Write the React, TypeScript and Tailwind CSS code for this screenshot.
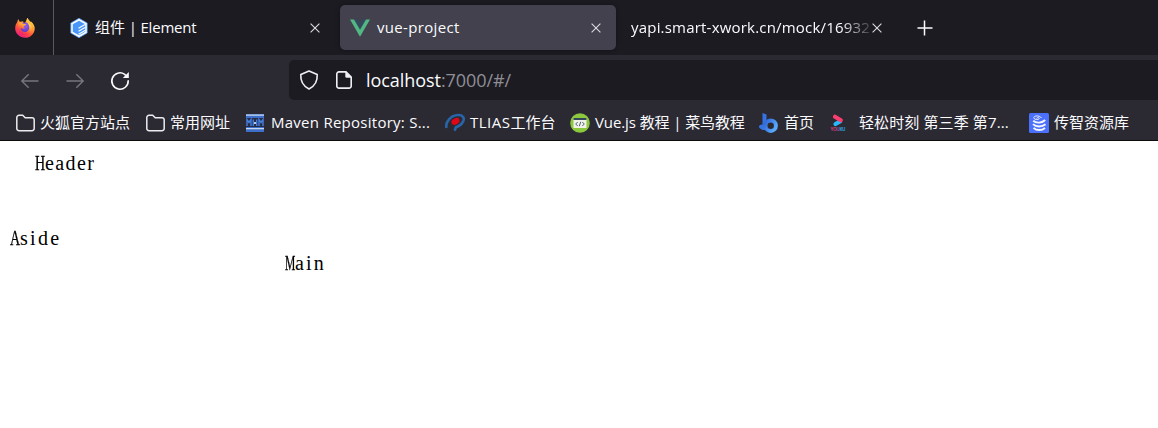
import type { ReactNode } from 'react';

const ui = "font-['Open_Sans','Noto_Sans_CJK_SC',sans-serif]";

function Firefox() {
  return (
    <svg width="20" height="20" viewBox="0 0 20 20">
      <defs>
        <linearGradient id="flame" x1="0.85" y1="0" x2="0.25" y2="1">
          <stop offset="0" stopColor="#fff44f" />
          <stop offset="0.35" stopColor="#ffa436" />
          <stop offset="0.7" stopColor="#ff4a3f" />
          <stop offset="1" stopColor="#e61587" />
        </linearGradient>
        <radialGradient id="globe" cx="0.6" cy="0.3" r="0.8">
          <stop offset="0" stopColor="#9059ff" />
          <stop offset="1" stopColor="#5b38b8" />
        </radialGradient>
      </defs>
      <path d="M2.2 4.200 3.100 1l1.600 2.700 2-.2L8.300 3.200c-.4 1 .2 1.800 1.700 2.100L12.500-.5c.8 2.400 2.300 3.300 3.200 4.600l.3-.7c2.500 2 3.900 4.700 3.700 7.500C19.400 16 15.200 19.800 10 19.800S.3 15.800.2 10.600C.1 7.800.9 5.800 2.200 4.200Z" fill="url(#flame)" />
      <circle cx="10" cy="9.500" r="4.900" fill="url(#globe)" />
      <path d="M3.500 4.800c1.500-.5 3.200-.2 4.500.9 1.500 0 2.700.3 3 .9-.5 1.100-2 1-2.300 1.900-.2 1 .6 1.500 1.800 1.300-1.200 1.500-3.500 1.200-4.600-.1-.4 3 2.400 5 5.200 4.300 3.800-1 4-6 1.500-9 4 .7 5.200 5.500 3.700 8.500-2.500 5-10 5-12.300.3-1.300-2.800-1-6-.5-9Z" fill="url(#flame)" />
    </svg>
  );
}

function ElementLogo() {
  return (
    <svg width="20" height="20" viewBox="0 0 20 20">
      <path d="M10 .3 18.200 5v10L10 19.700 1.800 15V5Z" fill="#f5faff" stroke="#4794f5" strokeWidth="0.700" />
      <path d="m10 2.700 6.200 3.500v7.600L10 17.300l-6.200-3.500V6.200Z" fill="#4996fb" />
      <path d="m9.500 10.200 7-4M9.500 13.200l7-4M9.500 16.200l7-4" stroke="#f5faff" strokeWidth="1.300" />
    </svg>
  );
}

function VueLogo() {
  return (
    <svg width="20" height="20" viewBox="0 0 20 20">
      <path d="M4 1.400h4l2 3.400 2-3.400h4L10 12Z" fill="#35495e" />
      <path d="M0 1.400h4l6 10.300 6-10.300h4L10 18.700Z" fill="#53b784" />
    </svg>
  );
}

function Close() {
  return (
    <svg width="10" height="10" viewBox="0 0 10 10" className="shrink-0">
      <path d="m.6.600 8.800 8.800m0-8.800L.6 9.400" stroke="#d8d8dc" strokeWidth="1.150" />
    </svg>
  );
}

function Arrow({ flip = false }: { flip?: boolean }) {
  return (
    <svg width="20" height="20" viewBox="0 0 20 20" className={flip ? 'rotate-180' : ''}>
      <path d="M18.500 10H1.800M8.700 3.200 1.800 10l6.900 6.800" fill="none" stroke="#77767d" strokeWidth="1.400" />
    </svg>
  );
}

function Reload() {
  return (
    <svg width="20" height="20" viewBox="0 0 20 20">
      <path d="M18.200 9.800a8.200 8.200 0 1 1-3.500-6.500L17 5.500" fill="none" stroke="#fbfbfe" strokeWidth="1.600" strokeLinecap="round" />
      <path d="M18.800 1.100v6h-6Z" fill="#fbfbfe" />
    </svg>
  );
}

function Shield() {
  return (
    <svg width="20" height="20" viewBox="0 0 20 20">
      <path d="M10 1 18.200 4.600c.4 6-2.600 11.500-8.200 14.400C4.400 16.100 1.400 10.600 1.800 4.600Z" fill="none" stroke="#f0f0f4" strokeWidth="1.600" strokeLinejoin="round" />
    </svg>
  );
}

function PageIcon() {
  return (
    <svg width="20" height="20" viewBox="0 0 20 20">
      <path d="M12 1.900H5A2.200 2.200 0 0 0 2.800 4.100v11.800A2.200 2.200 0 0 0 5 18.100h10a2.200 2.200 0 0 0 2.200-2.200V7Z" fill="none" stroke="#f0f0f4" strokeWidth="1.600" />
      <path d="M11.300 1.200 18 7.800h-5.200a1.500 1.500 0 0 1-1.500-1.500Z" fill="#f0f0f4" />
    </svg>
  );
}

function Folder() {
  return (
    <svg width="20" height="20" viewBox="0 0 20 20">
      <path d="M4 2.300h3.700l2.500 2.400H17a2.200 2.200 0 0 1 2.200 2.200v8.600a2.200 2.200 0 0 1-2.200 2.200H4a2.200 2.200 0 0 1-2.200-2.200v-11A2.200 2.200 0 0 1 4 2.300Z" fill="none" stroke="#ececf0" strokeWidth="1.500" />
    </svg>
  );
}

function Maven() {
  return (
    <svg width="20" height="20" viewBox="0 0 20 20">
      <path d="M1 1h18v18H1Z" fill="#3d6fc9" />
      <path d="M1 1.500h18v1.300H1ZM1 15h18v1.300H1Z" fill="#c9d7ef" />
      <path d="M1 5h18v9H1Z" fill="#252d49" />
      <path d="M2 13V6.500l2 3 2-3V13M8.300 6.500V13M8.300 10h3.400M11.700 6.500V13M14 13V6.500l2 3 2-3V13" fill="none" stroke="#4680df" strokeWidth="1.400" />
      <circle cx="10" cy="10" r="1" fill="#dce7fa" />
    </svg>
  );
}

function Tlias() {
  return (
    <svg width="20" height="20" viewBox="0 0 20 20">
      <path d="M1.500 15C0 9 6 2.300 13 2c5-.2 7 3 4.900 6.800-1.500 2.700-4 4.500-7 5.500l-1.300 3.500" fill="none" stroke="#2865a8" strokeWidth="2.600" />
      <ellipse cx="10.500" cy="8.400" rx="4.300" ry="3" transform="rotate(-30 10.500 8.400)" fill="#df0618" />
    </svg>
  );
}

function Runoob() {
  return (
    <svg width="20" height="20" viewBox="0 0 20 20">
      <circle cx="10" cy="10" r="9.800" fill="#8bc83e" />
      <path d="M3.500 5h13v10h-13Z" fill="#f0f1e9" />
      <path d="M3.500 5h13v2h-13Z" fill="#33465c" />
      <path d="m7.700 9-2 2 2 2m4.600-4 2 2-2 2M10.700 8.800l-1.400 4.400" fill="none" stroke="#4d6075" strokeWidth="1" />
    </svg>
  );
}

function BlueB() {
  return (
    <svg width="20" height="20" viewBox="0 0 20 20">
      <defs>
        <linearGradient id="blueb" x1="0" y1="0" x2="1" y2="0.600">
          <stop offset="0" stopColor="#3067d8" />
          <stop offset="1" stopColor="#58a9fc" />
        </linearGradient>
      </defs>
      <path d="M3.500 0 7.500 1.500v11h-4ZM-.5 13.500c2-2.300 4.500-2.300 6.500-1v4.500c-2.500.5-5-1-6.500-3.500Z" fill="#3672e2" />
      <circle cx="11.700" cy="12.700" r="5.200" fill="none" stroke="url(#blueb)" strokeWidth="4" />
    </svg>
  );
}

function Youku() {
  return (
    <svg width="20" height="20" viewBox="0 0 20 20">
      <path d="m6.500 11 4.500-2.500" stroke="#29b8fa" strokeWidth="4.200" strokeLinecap="round" />
      <path d="m6 3.800 5.800 3.400" stroke="#fb3e70" strokeWidth="4.200" strokeLinecap="round" />
      <text x="1.500" y="18.300" fontSize="4.500" fontWeight="700" fontFamily="Open Sans, sans-serif" textLength="15" fill="#cf3b70">YO<tspan fill="#8256a4">U</tspan><tspan fill="#2aa0dc">KU</tspan></text>
    </svg>
  );
}

function Czbk() {
  return (
    <svg width="20" height="20" viewBox="0 0 20 20">
      <rect width="20" height="20" rx="1.500" fill="#4b70fb" />
      <path d="M4.200 7.800c3 2.700 9 2.300 12-.8M4 11.200c3 3 9 3 12.500 0M4.500 14.800c3 3 8.500 3 11.500 0" fill="none" stroke="#f4f6ff" strokeWidth="1.900" />
      <path d="M12.500 5C10.500 2 4.800 2.500 4.800 4.700s4.700 2.300 5.500.9c.2-1.200-2.500-1.300-2.700-.3" fill="none" stroke="#e9edff" strokeWidth="1" />
    </svg>
  );
}

function Bookmark({ width, icon, children }: { width: string; icon: ReactNode; children: ReactNode }) {
  return (
    <div className={`flex shrink-0 items-center gap-[5px] whitespace-pre ${width}`}>
      {icon}
      <span className="mb-[2px] leading-5">{children}</span>
    </div>
  );
}

function Word({ initial, scale, rest, tracking }: { initial: string; scale: string; rest: string; tracking: string }) {
  return (
    <span className="flex">
      <span className={`inline-block w-[10px] origin-left [-webkit-text-stroke:0.3px_black] ${scale}`}>{initial}</span>
      <span className={tracking}>{rest}</span>
    </span>
  );
}

export default function App() {
  return (
    <div className={`flex h-[428px] w-full flex-col overflow-hidden bg-white text-[15px] text-[#fbfbfe] ${ui}`}>
      <div className="flex h-[55px] shrink-0 items-center bg-[#1c1b22]">
        <div className="flex h-full w-[54px] items-center border-r border-[#5a5960] pl-[15px]"><Firefox /></div>
        <div className="flex w-[286px] items-center pl-[15px] pr-[20px]">
          <ElementLogo />
          <span className="ml-[6px] flex-1 whitespace-pre">组件<span className="tracking-[-0.2px]"> | Element</span></span>
          <Close />
        </div>
        <div className="flex h-[45px] w-[276px] items-center rounded-[5px] bg-[#42414d] pl-[10px] pr-[15px] shadow-[0_0_4px_rgba(0,0,0,0.4)]">
          <VueLogo />
          <span className="ml-[7px] flex-1 tracking-[0.33px]">vue-project</span>
          <Close />
        </div>
        <div className="flex w-[267px] items-center pl-[15px]">
          <span className="w-[241px] overflow-hidden whitespace-nowrap tracking-[0.2px] [mask-image:linear-gradient(to_right,black_210px,transparent_244px)]">yapi.smart-xwork.cn/mock/16932</span>
          <Close />
        </div>
        <svg width="16" height="16" viewBox="0 0 16 16" className="ml-[34px]"><path d="M7.500.5v15M.5 8h15" stroke="#fbfbfe" strokeWidth="1.500" /></svg>
      </div>
      <div className="flex h-[50px] shrink-0 items-center bg-[#2b2a33] pl-[20px]">
        <div className="flex w-[269px] gap-[25px] pt-px"><Arrow /><Arrow flip /><Reload /></div>
        <div className="flex h-10 flex-1 items-center rounded-l-[5px] bg-[#1c1b22] pl-[10px] text-[18px]">
          <Shield />
          <span className="ml-[15px]"><PageIcon /></span>
          <span className="ml-[12px] pt-px tracking-[-0.06px]">localhost<span className="text-[#8f8e95]">:7000/#/</span></span>
        </div>
      </div>
      <div className="flex h-[36px] shrink-0 items-center border-b border-[#0c0c0d] bg-[#2b2a33] pl-[15px]">
        <Bookmark width="w-[130px]" icon={<Folder />}>火狐官方站点</Bookmark>
        <Bookmark width="w-[100px]" icon={<Folder />}>常用网址</Bookmark>
        <Bookmark width="w-[200px]" icon={<Maven />}><span className="pl-px tracking-[0.26px]">Maven Repository: S...</span></Bookmark>
        <Bookmark width="w-[125px]" icon={<Tlias />}><span className="tracking-[0.5px]">TLIAS</span>工作台</Bookmark>
        <Bookmark width="w-[189px]" icon={<Runoob />}><span className="tracking-[-0.1px]">Vue.js 教程 | 菜鸟教程</span></Bookmark>
        <Bookmark width="w-[70px]" icon={<BlueB />}>首页</Bookmark>
        <Bookmark width="w-[200px]" icon={<span className="mr-[5px]"><Youku /></span>}><span className="tracking-[0.12px]">轻松时刻 第三季 第7...</span></Bookmark>
        <Bookmark width="w-[125px]" icon={<Czbk />}>传智资源库</Bookmark>
      </div>
      <div className="flex flex-1 flex-col bg-white pt-[10px] font-['Liberation_Serif',serif] text-[20px] leading-[25px] text-black">
        <header className="h-[75px] pl-[35px]"><Word initial="H" scale="scale-x-[0.7]" rest="eader" tracking="tracking-[1.4px]" /></header>
        <div className="flex">
          <aside className="w-[275px] pl-[10px]"><Word initial="A" scale="scale-x-[0.7]" rest="side" tracking="tracking-[2.3px]" /></aside>
          <main className="pl-[10px] pt-[25px]"><Word initial="M" scale="scale-x-[0.58]" rest="ain" tracking="tracking-[2.2px]" /></main>
        </div>
      </div>
    </div>
  );
}
